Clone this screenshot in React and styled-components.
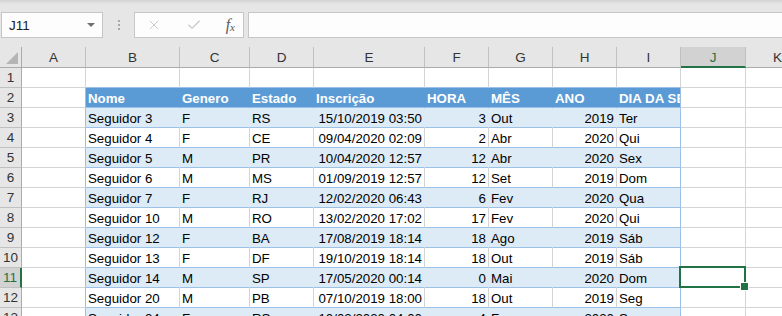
import React from "react";
import styled, { createGlobalStyle } from "styled-components";
import { X, Check } from "lucide-react";

const GRID = "#d4d4d4";
const EDGE = "#9bc2e6";
const HEAD = "#5b9bd5";
const BAND = "#ddebf7";
const GREEN = "#217346";

const columns = ["A", "B", "C", "D", "E", "F", "G", "H", "I", "J", "K"];
const widths = [64, 94, 70, 64, 111, 64, 64, 64, 64, 65, 64];
const aligns = ["left", "left", "left", "right", "right", "left", "right", "left"];

const header = ["Nome", "Genero", "Estado", "Inscrição", "HORA", "MÊS", "ANO", "DIA DA SEMANA"];
const records = [
    ["Seguidor 3", "F", "RS", "15/10/2019 03:50", "3", "Out", "2019", "Ter"],
    ["Seguidor 4", "F", "CE", "09/04/2020 02:09", "2", "Abr", "2020", "Qui"],
    ["Seguidor 5", "M", "PR", "10/04/2020 12:57", "12", "Abr", "2020", "Sex"],
    ["Seguidor 6", "M", "MS", "01/09/2019 12:57", "12", "Set", "2019", "Dom"],
    ["Seguidor 7", "F", "RJ", "12/02/2020 06:43", "6", "Fev", "2020", "Qua"],
    ["Seguidor 10", "M", "RO", "13/02/2020 17:02", "17", "Fev", "2020", "Qui"],
    ["Seguidor 12", "F", "BA", "17/08/2019 18:14", "18", "Ago", "2019", "Sáb"],
    ["Seguidor 13", "F", "DF", "19/10/2019 18:14", "18", "Out", "2019", "Sáb"],
    ["Seguidor 14", "M", "SP", "17/05/2020 00:14", "0", "Mai", "2020", "Dom"],
    ["Seguidor 20", "M", "PB", "07/10/2019 18:00", "18", "Out", "2019", "Seg"],
    ["Seguidor 24", "F", "RS", "10/02/2020 04:00", "4", "Fev", "2020", "Seg"],
];

const ACTIVE_ROW = 11;
const ACTIVE_COL = 9;

export default function App() {
    const rows = [];
    for (let r = 1; r <= 13; r++) {
        const cells = [];
        columns.forEach((col, c) => {
            const inTable = r >= 2 && c >= 1 && c <= 8;
            let kind = "empty";
            let value = "";
            let align = "left";
            if (inTable) {
                kind = r === 2 ? "head" : r % 2 === 1 ? "band" : "plain";
                value = r === 2 ? header[c - 1] : records[r - 3][c - 1];
                align = r === 2 ? "left" : aligns[c - 1];
            }
            let right = GRID;
            if (r >= 2 && (c === 0 || c === 8)) right = EDGE;
            else if (kind === "head") right = HEAD;
            else if (kind === "band") right = BAND;
            const bottom = inTable || (r === 1 && c >= 1 && c <= 8) ? EDGE : GRID;
            cells.push(
                <Cell
                    key={col + r}
                    $kind={kind}
                    $align={align}
                    $right={right}
                    $bottom={bottom}
                    $active={r === ACTIVE_ROW && c === ACTIVE_COL}
                >
                    {value}
                </Cell>
            );
        });
        rows.push(
            <React.Fragment key={r}>
                <RowHead $active={r === ACTIVE_ROW}>{r}</RowHead>
                {cells}
            </React.Fragment>
        );
    }

    return (
        <Page>
            <GlobalStyle />
            <Toolbar>
                <NameBox>
                    <NameText>J11</NameText>
                    <Caret />
                </NameBox>
                <Grip>
                    <span />
                    <span />
                    <span />
                </Grip>
                <FxBox>
                    <ToolIcon>
                        <X size={16} strokeWidth={1.3} />
                    </ToolIcon>
                    <ToolIcon>
                        <Check size={16} strokeWidth={1.6} />
                    </ToolIcon>
                    <FxLabel>
                        f<sub>x</sub>
                    </FxLabel>
                </FxBox>
                <FormulaInput />
            </Toolbar>
            <Sheet>
                <Corner />
                {columns.map((col, c) => (
                    <ColHead key={col} $active={c === ACTIVE_COL}>
                        {col}
                    </ColHead>
                ))}
                {rows}
            </Sheet>
        </Page>
    );
}

const GlobalStyle = createGlobalStyle`
    html, body {
        margin: 0;
        padding: 0;
        background: #ffffff;
        overflow: hidden;
    }
    * {
        box-sizing: border-box;
    }
`;

const Page = styled.div`
    width: 782px;
    height: 316px;
    overflow: hidden;
    font-family: "Liberation Sans", Arial, sans-serif;
    color: #000;
`;

const Toolbar = styled.div`
    height: 47px;
    display: flex;
    align-items: flex-start;
    padding: 12px 0 0 1px;
    background: linear-gradient(#d2d2d2, #e6e6e6 4px, #e6e6e6);
`;

const NameBox = styled.div`
    width: 102px;
    height: 26px;
    display: flex;
    align-items: center;
    justify-content: space-between;
    padding: 0 7px 0 7px;
    background: #fdfdfd;
    border: 1px solid #c6c6c6;
`;

const NameText = styled.span`
    font-size: 13.5px;
    color: #222;
`;

const Caret = styled.span`
    width: 0;
    height: 0;
    border-left: 4px solid transparent;
    border-right: 4px solid transparent;
    border-top: 4px solid #707070;
`;

const Grip = styled.div`
    width: 31px;
    height: 26px;
    display: flex;
    flex-direction: column;
    align-items: center;
    justify-content: center;
    gap: 2px;

    span {
        width: 2px;
        height: 2px;
        background: #a8a8a8;
    }
`;

const FxBox = styled.div`
    width: 110px;
    height: 26px;
    display: flex;
    align-items: center;
    justify-content: space-between;
    padding: 0 8px 0 11px;
    background: #fdfdfd;
    border: 1px solid #c6c6c6;
`;

const ToolIcon = styled.span`
    display: flex;
    color: #c4c4c4;
`;

const FxLabel = styled.span`
    font-family: "Liberation Serif", "Times New Roman", serif;
    font-style: italic;
    font-size: 16px;
    color: #5a5a5a;

    sub {
        font-size: 11px;
        vertical-align: -1px;
    }
`;

const FormulaInput = styled.div`
    flex: 1;
    height: 26px;
    margin-left: 4px;
    background: #fdfdfd;
    border: 1px solid #c6c6c6;
    border-right: none;
`;

const Sheet = styled.div`
    display: grid;
    grid-template-columns: 22px ${widths.map((w) => w + "px").join(" ")};
    grid-template-rows: 21px;
    grid-auto-rows: 20px;
    font-size: 13.3px;
`;

const Corner = styled.div`
    position: relative;
    background: #e6e6e6;
    border-right: 1px solid #ababab;
    border-bottom: 1px solid #ababab;

    &::after {
        content: "";
        position: absolute;
        right: 3px;
        bottom: 3px;
        border-left: 12px solid transparent;
        border-bottom: 12px solid #b5b5b5;
    }
`;

const ColHead = styled.div`
    display: flex;
    align-items: center;
    justify-content: center;
    background: ${(p) => (p.$active ? "#d2d2d2" : "#e6e6e6")};
    color: ${(p) => (p.$active ? GREEN : "#333")};
    border-right: 1px solid #c0c0c0;
    border-bottom: ${(p) => (p.$active ? `2px solid ${GREEN}` : "1px solid #ababab")};
    padding-top: ${(p) => (p.$active ? "1px" : "0")};
    font-size: 13.5px;
`;

const RowHead = styled.div`
    display: flex;
    align-items: center;
    justify-content: center;
    background: ${(p) => (p.$active ? "#d2d2d2" : "#e6e6e6")};
    color: ${(p) => (p.$active ? GREEN : "#333")};
    border-right: ${(p) => (p.$active ? `2px solid ${GREEN}` : "1px solid #ababab")};
    border-bottom: 1px solid #c0c0c0;
    font-size: 13.5px;
`;

const kindBg = { empty: "#ffffff", plain: "#ffffff", band: BAND, head: HEAD };

const Cell = styled.div`
    position: relative;
    display: flex;
    align-items: center;
    justify-content: ${(p) => (p.$align === "right" ? "flex-end" : "flex-start")};
    padding: 2px 2px 0 2px;
    white-space: nowrap;
    background: ${(p) => kindBg[p.$kind]};
    color: ${(p) => (p.$kind === "head" ? "#ffffff" : "#000")};
    font-weight: ${(p) => (p.$kind === "head" ? 700 : 400)};
    border-right: 1px solid ${(p) => p.$right};
    border-bottom: 1px solid ${(p) => p.$bottom};
    overflow: ${(p) => (p.$active ? "visible" : "hidden")};
    z-index: ${(p) => (p.$active ? 2 : "auto")};

    ${(p) =>
        p.$active &&
        `
        &::after {
            content: "";
            position: absolute;
            top: -2px;
            left: -2px;
            right: -1px;
            bottom: -1px;
            border: 2px solid ${GREEN};
        }
        &::before {
            content: "";
            position: absolute;
            right: -4px;
            bottom: -4px;
            width: 7px;
            height: 7px;
            background: ${GREEN};
            border: 1px solid #ffffff;
            z-index: 3;
        }
    `}
`;
